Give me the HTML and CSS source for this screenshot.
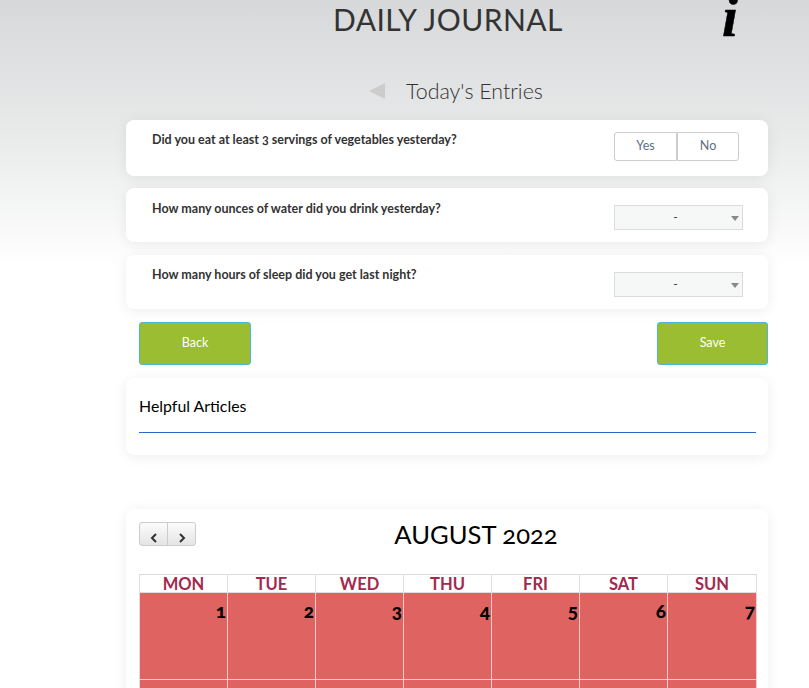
FILE: index.html
```html
<!DOCTYPE html>
<html lang="en">
<head>
<meta charset="utf-8">
<title>Daily Journal</title>
<link rel="stylesheet" href="styles.css">
</head>
<body>
<div class="bg">
  <header class="top">
    <h1 class="title">DAILY JOURNAL</h1>
    <span class="info">i</span>
  </header>
  <div class="subhead">
    <span class="back-arrow"></span>
    <h2 class="subtitle">Today's Entries</h2>
  </div>
  <main class="column">
    <section class="card q q-first">
      <p class="q-text">Did you eat at least 3 servings of vegetables yesterday?</p>
      <div class="toggle"><span class="toggle-btn">Yes</span><span class="toggle-btn">No</span></div>
    </section>
    <section class="card q q-second">
      <p class="q-text">How many ounces of water did you drink yesterday?</p>
      <div class="select"><span class="select-val">-</span><span class="select-caret"></span></div>
    </section>
    <section class="card q q-third">
      <p class="q-text">How many hours of sleep did you get last night?</p>
      <div class="select"><span class="select-val">-</span><span class="select-caret"></span></div>
    </section>
    <div class="actions">
      <button class="btn btn-back">Back</button>
      <button class="btn btn-save">Save</button>
    </div>
    <section class="card articles">
      <h3 class="articles-title">Helpful Articles</h3>
    </section>
    <section class="card calendar">
      <div class="cal-head">
        <div class="cal-nav">
          <span class="cal-nav-btn"><svg class="chev" viewBox="0 0 8 10"><path d="M6 1 L2 5 L6 9"/></svg></span>
          <span class="cal-nav-btn"><svg class="chev" viewBox="0 0 8 10"><path d="M2 1 L6 5 L2 9"/></svg></span>
        </div>
        <h2 class="cal-title">AUGUST 2022</h2>
      </div>
      <div class="cal-grid">
        <div class="dow">MON</div><div class="dow">TUE</div><div class="dow">WED</div><div class="dow">THU</div><div class="dow">FRI</div><div class="dow">SAT</div><div class="dow">SUN</div>
        <div class="day">1</div><div class="day">2</div><div class="day">3</div><div class="day">4</div><div class="day">5</div><div class="day">6</div><div class="day">7</div>
        <div class="day"></div><div class="day"></div><div class="day"></div><div class="day"></div><div class="day"></div><div class="day"></div><div class="day"></div>
      </div>
    </section>
  </main>
</div>
</body>
</html>
```
FILE: styles.css
```css
html, body { margin: 0; padding: 0; height: 688px; overflow: hidden; background: #fff; }
body { font-family: "Lato", "Open Sans", sans-serif; color: #333; font-variant-numeric: oldstyle-nums; }
.bg { height: 688px; overflow: hidden; background: linear-gradient(to bottom, #d6d8da 0, #e8e9e9 130px, #fff 268px); }
.top { display: flex; height: 39px; position: relative; justify-content: center; padding-left: 87px; width: 722px; }
.title { margin: 0; font-size: 30px; font-weight: 400; line-height: 38px; color: #333; letter-spacing: 0.45px; }
.info { position: absolute; left: 722px; top: -18px; font-family: "Liberation Serif", serif; font-weight: bold; font-style: italic; font-size: 57px; line-height: 70px; color: #000; -webkit-text-stroke: 0.5px #000; }
.subhead { display: flex; align-items: center; margin: 37px 0 0 369px; height: 30px; }
.back-arrow { width: 0; height: 0; border-style: solid; border-width: 8px 16px 8px 0; border-color: transparent #ccc transparent transparent; margin-right: 21px; }
.subtitle { margin: 0; font-size: 21.4px; font-weight: 300; color: #333; line-height: 30px; }
.column { width: 642px; margin: 14px 0 0 126px; }
.card { background: #fff; border-radius: 8px; box-shadow: 0 2px 14px rgba(0,0,0,0.07); box-sizing: border-box; }
.q { display: flex; justify-content: space-between; padding-left: 26px; }
.q-first { height: 56px; padding-right: 29px; }
.q-second { height: 54px; margin-top: 12px; padding-right: 25px; }
.q-third { height: 54px; margin-top: 13px; padding-right: 25px; }
.q-text { margin: 13px 0 0; font-size: 12.5px; font-weight: 700; color: #333; line-height: 14px; }
.q-second .q-text { margin-top: 14px; }
.toggle { display: flex; margin-top: 12px; height: 29px; }
.toggle-btn { width: 63px; box-sizing: border-box; border: 1px solid #ccc; font-size: 12.5px; font-weight: 400; color: #5f7082; display: flex; align-items: center; justify-content: center; padding-bottom: 2px; }
.toggle-btn:first-child { border-radius: 3px 0 0 3px; }
.toggle-btn:last-child { width: 62px; border-radius: 0 3px 3px 0; }
.select { position: relative; box-sizing: border-box; width: 129px; height: 25px; margin-top: 17px; background: #f6f7f7; border: 1px solid #dcdcdc; display: flex; align-items: center; justify-content: center; font-size: 12px; padding: 0 6px 2px 0; }
.select-caret { position: absolute; right: 3px; top: 10px; width: 0; height: 0; border-style: solid; border-width: 5px 4px 0; border-color: #888 transparent transparent; }
.actions { display: flex; justify-content: space-between; margin: 13px 0 13px 13px; }
.btn { box-sizing: border-box; height: 43px; background: #9abd31; border: 1px solid #4cb8d8; border-radius: 3px; color: #fff; font: 400 12.5px "Lato", sans-serif; padding: 0 0 2px; }
.btn-back { width: 112px; }
.btn-save { width: 111px; }
.articles { height: 77px; padding: 0 12px 0 13px; }
.articles-title { margin: 0; height: 55px; box-sizing: border-box; border-bottom: 1px solid #2a66cc; font-size: 15.9px; font-weight: 400; color: #000; line-height: 56px; }
.calendar { margin-top: 54px; padding: 13px 11px 0 13px; height: 300px; }
.cal-head { display: flex; height: 52px; position: relative; }
.cal-nav { display: flex; height: 24px; width: 57px; box-sizing: border-box; border: 1px solid #ccc; border-radius: 3px; background: linear-gradient(#fcfcfc, #e4e4e4); }
.cal-nav-btn { flex: 1; display: flex; align-items: center; justify-content: center; padding-top: 7px; }
.cal-nav-btn + .cal-nav-btn { border-left: 1px solid #ccc; }
.chev { width: 8px; height: 10px; fill: none; stroke: #333; stroke-width: 2; }
.cal-title { margin: 0; position: absolute; left: 0; right: 0; top: -2px; padding-left: 56px; text-align: center; font-size: 25.6px; font-weight: 400; line-height: 28px; color: #000; }
.cal-grid { display: grid; grid-template-columns: repeat(6, 88px) 89px; grid-template-rows: 19px 87px 87px; border-left: 1px solid #ddd; width: 618px; }
.dow { border-top: 1px solid #ddd; border-right: 1px solid #ddd; border-bottom: 1px solid #ddd; text-align: center; font-size: 16.5px; font-weight: 700; line-height: 18px; color: #a3294f; background: #fff; box-sizing: border-box; height: 19px; }
.day { background: #df6361; border-right: 1px solid #f0cfce; border-bottom: 1px solid #f0cfce; text-align: right; font-size: 19px; font-weight: 900; color: #000; line-height: 20px; padding: 8px 1px 0 0; box-sizing: border-box; }
```
